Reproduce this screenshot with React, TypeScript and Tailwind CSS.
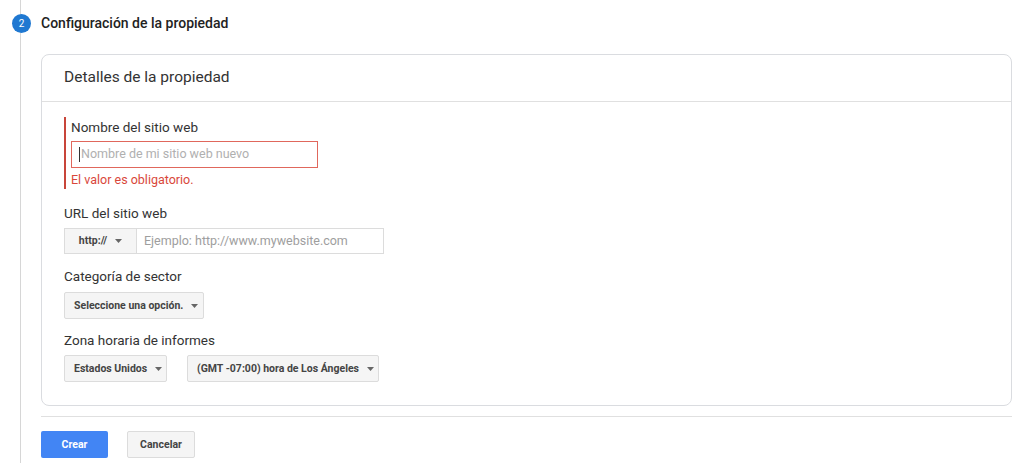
import { ReactNode } from "react"

function Caret() {
  return (
    <svg width="7" height="4" viewBox="0 0 7 4" className="ml-[8px] shrink-0">
      <path d="M0 0 L7 0 L3.5 4 Z" fill="#666" />
    </svg>
  )
}

function SelectBox({ label, width }: { label: string; width: string }) {
  return (
    <div
      className={`${width} h-[27px] flex items-center pl-[9px] bg-[#f5f5f5] border border-[#dcdcdc] rounded-[2px] text-[10.5px] font-bold text-[#444]`}
    >
      <span className="whitespace-nowrap">{label}</span>
      <Caret />
    </div>
  )
}

function FieldLabel({ children }: { children: ReactNode }) {
  return <div className="text-[13.5px] leading-[20px] text-[#333]">{children}</div>
}

function App() {
  return (
    <div className="w-[1024px] h-[463px] overflow-hidden bg-white flex font-['Roboto',sans-serif]">
      <div className="w-[41px] relative shrink-0">
        <div className="absolute left-[20px] top-0 bottom-0 w-px bg-[#d6d6d6]" />
        <div className="absolute left-[12px] top-[14px] w-[19px] h-[19px] rounded-full bg-[#1f78d1] text-white text-[10px] flex items-center justify-center">
          2
        </div>
      </div>

      <div className="flex-1 pr-[12px]">
        <div className="pt-[13px] h-[33px] text-[14px] leading-[20px] font-medium text-[#222]">
          Configuración de la propiedad
        </div>

        <div className="mt-[21px] border border-[#dadce0] rounded-[8px]">
          <div className="h-[47px] flex items-center pl-[22px] border-b border-[#e0e0e0] text-[15.5px] text-[#333]">
            Detalles de la propiedad
          </div>

          <div className="pl-[22px] pt-[15px] pb-[23px]">
            <div className="border-l-2 border-[#c8453a] pl-[5px] pt-[1px] pb-[1px]">
              <div className="text-[13.5px] leading-[18px] text-[#333]">Nombre del sitio web</div>
              <div className="mt-[5px] w-[247px] h-[27px] border border-[#e0675c] flex items-center pl-[7px] text-[12.5px] text-[#b0b0b0]">
                <span className="w-px h-[15px] bg-[#333] mr-px" />
                Nombre de mi sitio web nuevo
              </div>
              <div className="mt-[4px] text-[12.5px] leading-[16px] text-[#d9473b]">El valor es obligatorio.</div>
            </div>

            <div className="mt-[14px]">
              <FieldLabel>URL del sitio web</FieldLabel>
              <div className="mt-[5px] flex h-[26px] w-[320px]">
                <div className="w-[73px] flex items-center justify-center bg-[#f5f5f5] border border-[#dcdcdc] text-[10.5px] font-bold text-[#444]">
                  <span>http://</span>
                  <Caret />
                </div>
                <div className="flex-1 border border-l-0 border-[#dcdcdc] flex items-center pl-[7px] text-[12.5px] text-[#9e9e9e]">
                  Ejemplo: http://www.mywebsite.com
                </div>
              </div>
            </div>

            <div className="mt-[12px]">
              <FieldLabel>Categoría de sector</FieldLabel>
              <div className="mt-[6px]">
                <SelectBox label="Seleccione una opción." width="w-[140px]" />
              </div>
            </div>

            <div className="mt-[11px]">
              <FieldLabel>Zona horaria de informes</FieldLabel>
              <div className="mt-[5px] flex gap-[20px]">
                <SelectBox label="Estados Unidos" width="w-[103px]" />
                <SelectBox label="(GMT -07:00) hora de Los Ángeles" width="w-[192px]" />
              </div>
            </div>
          </div>
        </div>

        <div className="mt-[10px] h-px bg-[#e0e0e0]" />

        <div className="mt-[14px] flex gap-[19px]">
          <button className="w-[67px] h-[27px] bg-[#4285f4] rounded-[2px] text-white text-[10.5px] font-bold">
            Crear
          </button>
          <button className="w-[68px] h-[27px] bg-[#f5f5f5] border border-[#dcdcdc] rounded-[2px] text-[#444] text-[10.5px] font-bold">
            Cancelar
          </button>
        </div>
      </div>
    </div>
  )
}

export default App
